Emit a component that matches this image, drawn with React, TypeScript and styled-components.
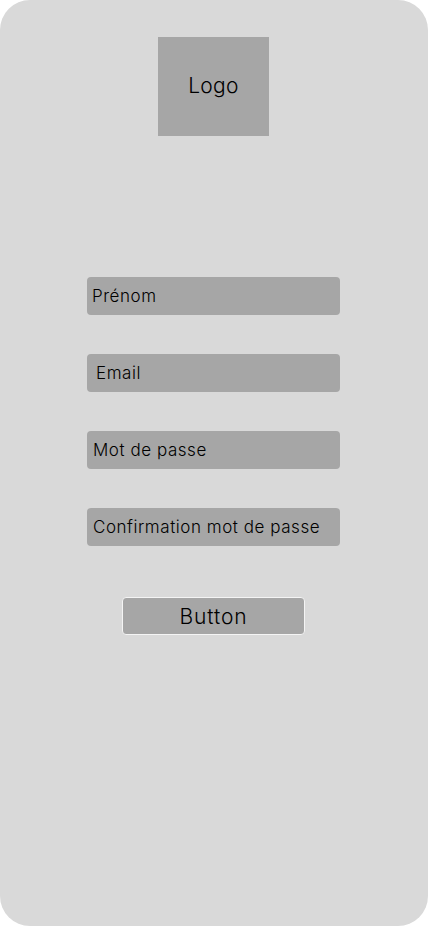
import React from "react";
import styled, { createGlobalStyle } from "styled-components";

const GlobalStyle = createGlobalStyle`
  html, body {
    margin: 0;
    padding: 0;
    background: #ffffff;
  }
  * {
    box-sizing: border-box;
  }
`;

const Frame = styled.div`
  width: 428px;
  height: 926px;
  background: #d9d9d9;
  border-radius: 30px;
  display: flex;
  flex-direction: column;
  align-items: center;
  padding: 37px 1px 0 0;
  font-family: Inter, "Noto Sans", sans-serif;
  color: #000;
`;

const LogoBox = styled.div`
  width: 111px;
  height: 99px;
  background: #a6a6a6;
  display: flex;
  align-items: center;
  justify-content: center;
  font-size: 21px;
  font-weight: 300;
  letter-spacing: 0.3px;
  padding-bottom: 2px;
`;

const Form = styled.form`
  margin-top: 141px;
  display: flex;
  flex-direction: column;
  align-items: center;
  gap: 39px;
`;

const Field = styled.input<{ $inset: number }>`
  width: 253px;
  height: 38px;
  margin: 0;
  border: none;
  border-radius: 4px;
  background: #a6a6a6;
  padding: 0 0 0 ${(p) => p.$inset}px;
  font-family: inherit;
  font-size: 17px;
  font-weight: 300;
  letter-spacing: 0.55px;
  color: #000;
  outline: none;

  &::placeholder {
    color: #000;
    opacity: 1;
  }
`;

const SubmitButton = styled.button`
  margin-top: 12px;
  width: 183px;
  height: 38px;
  border: 1px solid #f4f4f4;
  border-radius: 4px;
  background: #a6a6a6;
  font-family: inherit;
  font-size: 21px;
  font-weight: 300;
  letter-spacing: 0.9px;
  color: #000;
  padding: 0;
`;

const fields = [
  { label: "Prénom", inset: 5 },
  { label: "Email", inset: 9 },
  { label: "Mot de passe", inset: 6 },
  { label: "Confirmation mot de passe", inset: 6 },
];

export default function App() {
  return (
    <>
      <GlobalStyle />
      <Frame>
        <LogoBox>Logo</LogoBox>
        <Form onSubmit={(e) => e.preventDefault()}>
          {fields.map((f) => (
            <Field key={f.label} $inset={f.inset} placeholder={f.label} />
          ))}
          <SubmitButton type="submit">Button</SubmitButton>
        </Form>
      </Frame>
    </>
  );
}
